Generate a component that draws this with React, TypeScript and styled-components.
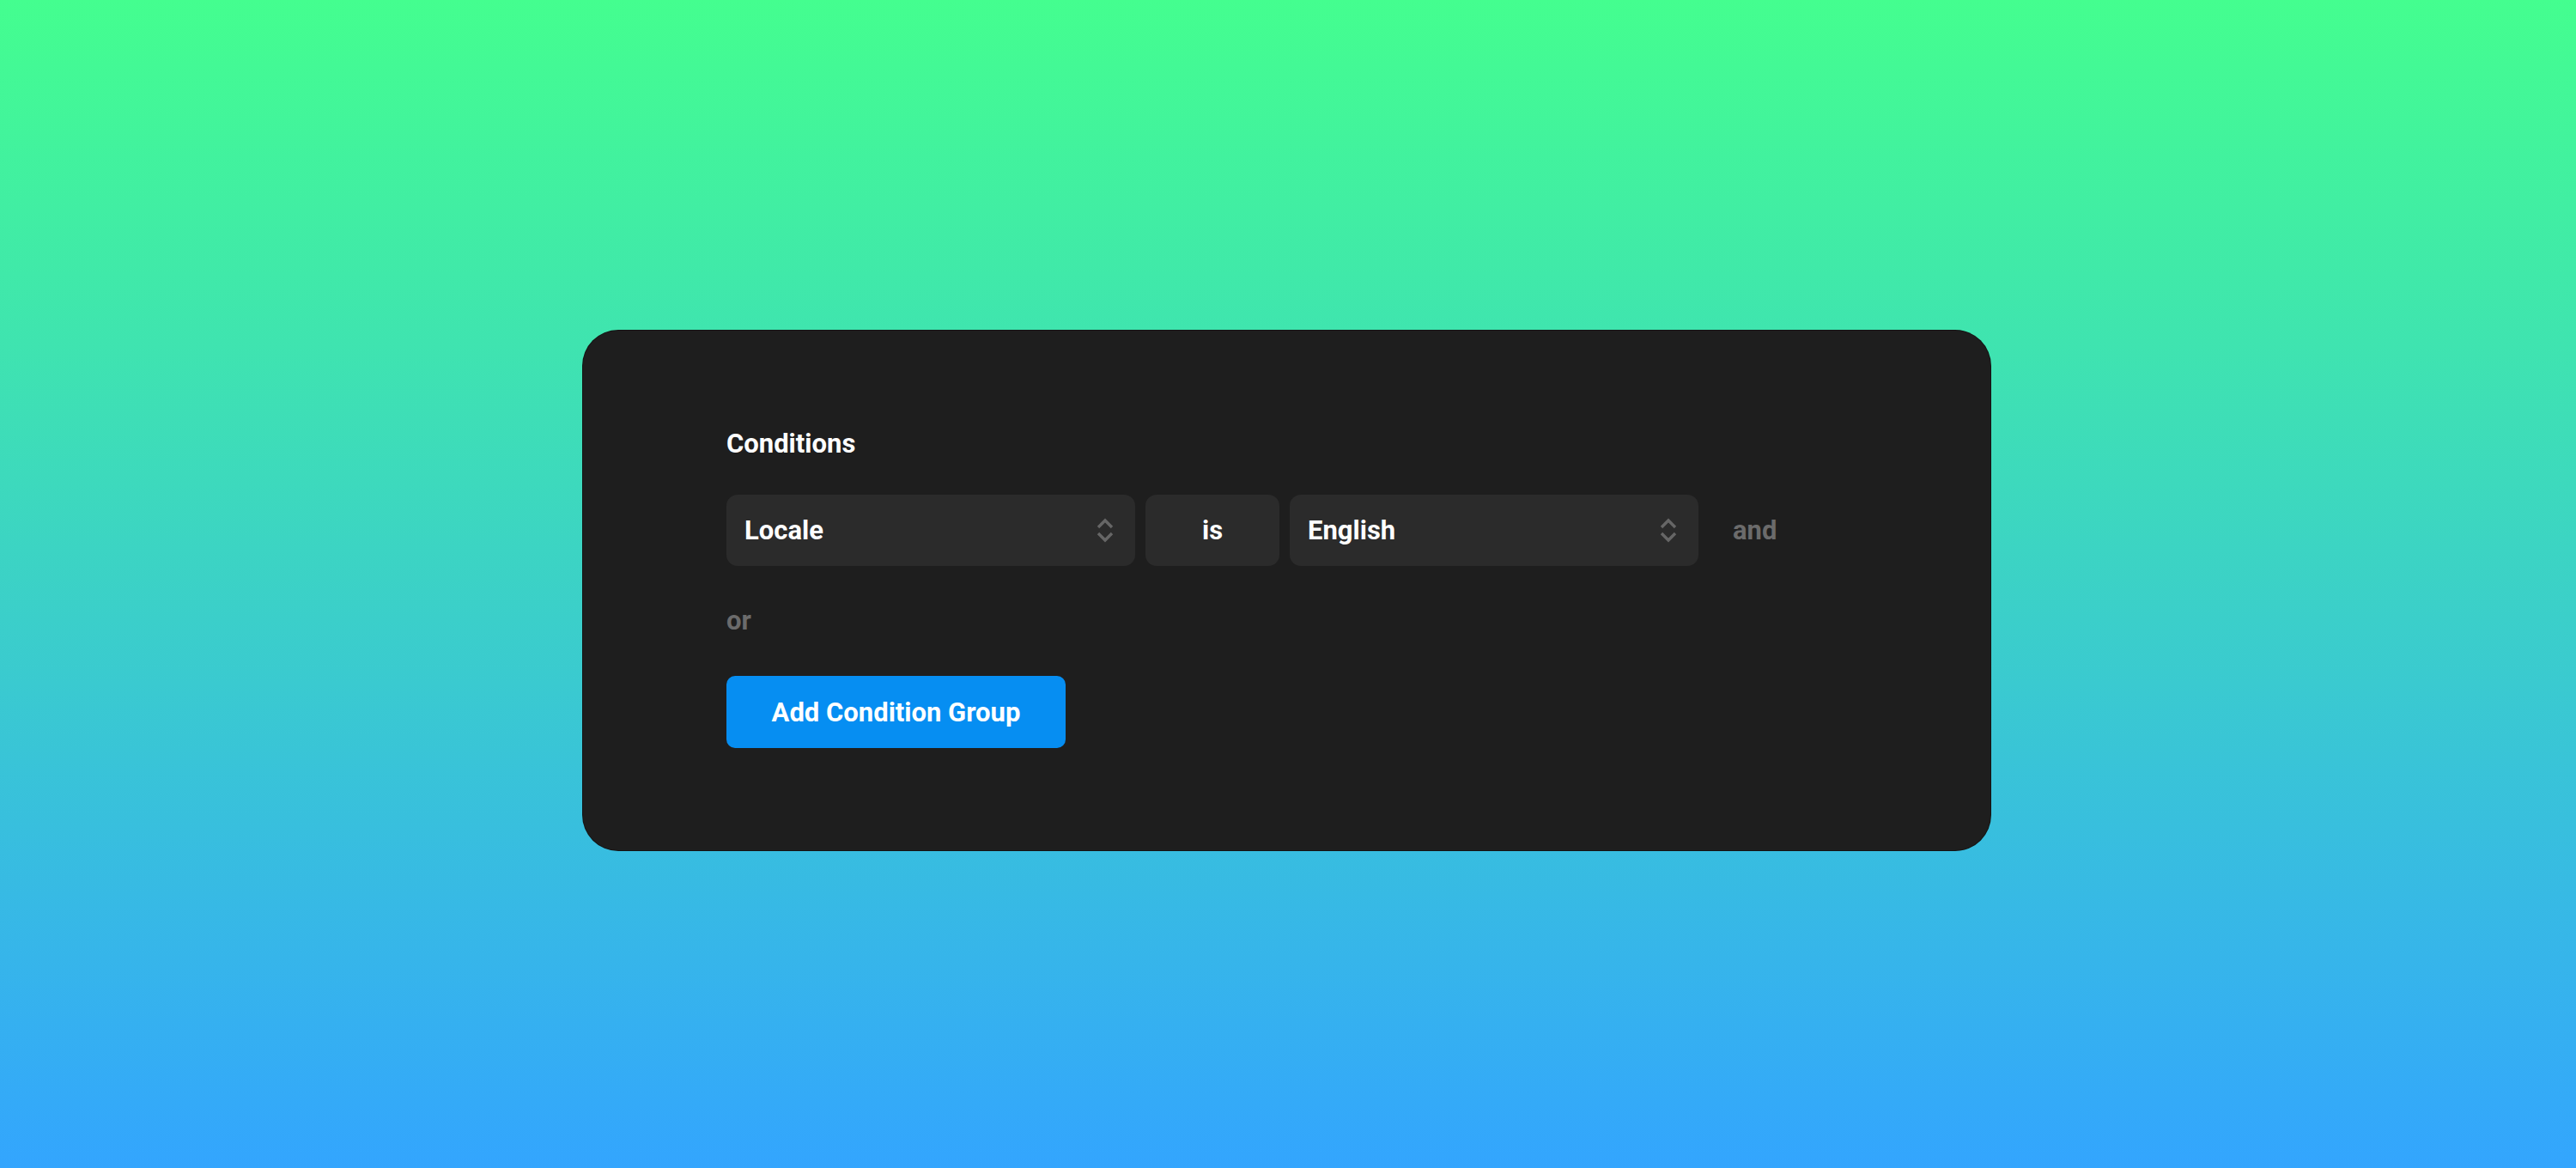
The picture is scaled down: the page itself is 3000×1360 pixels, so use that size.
import React from "react";
import styled, { createGlobalStyle } from "styled-components";

const GlobalStyle = createGlobalStyle`
  html, body {
    margin: 0;
    padding: 0;
  }
  body {
    font-family: Roboto, "Liberation Sans", sans-serif;
  }
  * {
    box-sizing: border-box;
  }
`;

const Page = styled.div`
  width: 100%;
  height: 1360px;
  background: linear-gradient(180deg, #44fe8f 0%, #33a5fe 100%);
  display: flex;
  justify-content: center;
  align-items: flex-start;
  padding: 384px 3px 0 0;
`;

const Card = styled.div`
  width: 1641px;
  height: 607px;
  background: #1e1e1e;
  border: 1px solid rgba(0, 0, 0, 0.35);
  border-radius: 42px;
  padding: 114px 167px 0 167px;
  display: flex;
  flex-direction: column;
`;

const Title = styled.div`
  color: #ffffff;
  font-size: 31px;
  font-weight: 700;
  line-height: 36px;
  margin-bottom: 41px;
`;

const Row = styled.div`
  display: flex;
  align-items: center;
  gap: 12px;
`;

const Field = styled.div<{ $width: number; $center?: boolean }>`
  width: ${(p) => p.$width}px;
  height: 83px;
  background: #2b2b2b;
  border-radius: 13px;
  display: flex;
  align-items: center;
  justify-content: ${(p) => (p.$center ? "center" : "space-between")};
  padding: ${(p) => (p.$center ? "0" : "0 24px 0 21px")};
  color: #ffffff;
  font-size: 31px;
  font-weight: 700;
`;

const Joiner = styled.span`
  color: #6b6b6b;
  font-size: 31px;
  font-weight: 700;
  line-height: 36px;
  margin-left: 28px;
`;

const Or = styled.div`
  color: #6b6b6b;
  font-size: 31px;
  font-weight: 700;
  line-height: 36px;
  margin: 46px 0;
`;

const AddButton = styled.button`
  align-self: flex-start;
  width: 395px;
  height: 84px;
  border: none;
  border-radius: 10px;
  background: #068ef2;
  color: #ffffff;
  font-family: Roboto, "Liberation Sans", sans-serif;
  font-size: 31px;
  font-weight: 700;
  cursor: pointer;
`;

const ChevronIcon = styled.svg`
  flex: none;
  display: block;
`;

const Chevrons = () => (
  <ChevronIcon width="22" height="29" viewBox="0 0 22 29" fill="none">
    <path d="M3 11 L11 3 L19 11" stroke="#666666" strokeWidth="3.4" />
    <path d="M3 18 L11 26 L19 18" stroke="#666666" strokeWidth="3.4" />
  </ChevronIcon>
);

export default function App() {
  return (
    <>
      <GlobalStyle />
      <Page>
        <Card>
          <Title>Conditions</Title>
          <Row>
            <Field $width={476}>
              <span>Locale</span>
              <Chevrons />
            </Field>
            <Field $width={156} $center>
              is
            </Field>
            <Field $width={476}>
              <span>English</span>
              <Chevrons />
            </Field>
            <Joiner>and</Joiner>
          </Row>
          <Or>or</Or>
          <AddButton>Add Condition Group</AddButton>
        </Card>
      </Page>
    </>
  );
}
